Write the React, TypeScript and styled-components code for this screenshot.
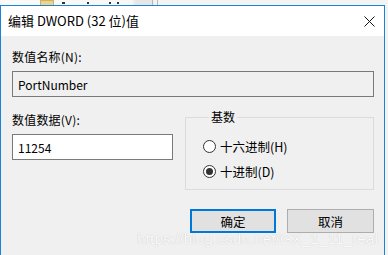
import React from 'react'
import styled, { createGlobalStyle } from 'styled-components'

const GlobalStyle = createGlobalStyle`
  html, body {
    margin: 0;
    padding: 0;
    background: #f2f2f2;
  }
  body {
    width: 388px;
    height: 255px;
    overflow: hidden;
    font-family: 'Microsoft YaHei UI', 'Noto Sans CJK SC', 'Liberation Sans', sans-serif;
  }
`

const Screen = styled.div`
  position: relative;
  width: 388px;
  height: 255px;
  overflow: hidden;
  display: flex;
  flex-direction: column;
`

const BackStrip = styled.div`
  height: 5px;
  display: flex;
  align-items: flex-end;
  background: linear-gradient(90deg, #fafafa 0%, #f7f7f7 34%, #e6e6e6 35%, #e6e6e6 39%, #f4f4f4 40%, #f4f4f4 100%);
  overflow: hidden;
`

const Folder = styled.span`
  width: 12px;
  height: 4px;
  margin-left: 40px;
  background: #ecd48e;
  border: 1px solid #cfb467;
  border-bottom: none;
`

const Mark = styled.span<{ left: number; w?: number }>`
  width: ${({ w }) => w ?? 2}px;
  height: 2px;
  margin-left: ${({ left }) => left}px;
  background: #333;
  margin-bottom: 1px;
`

const Sep = styled.span<{ left: number }>`
  width: 1px;
  height: 5px;
  margin-left: ${({ left }) => left}px;
  background: #b8b8b8;
`

const Dialog = styled.div`
  flex: 1;
  width: 383px;
  display: flex;
  flex-direction: column;
  border: 1px solid #1883d7;
  border-bottom: none;
  background: #f0f0f0;
`

const TitleBar = styled.div`
  height: 30px;
  display: flex;
  align-items: center;
  justify-content: space-between;
  padding: 0 9px 0 7px;
  background: #fff;
`

const Title = styled.span`
  font-size: 13px;
  color: #000;
  padding-bottom: 1px;
`

const CloseIcon = () => (
  <svg width="11" height="11" viewBox="0 0 11 11">
    <path d="M0.5 0.5 L10.5 10.5 M10.5 0.5 L0.5 10.5" stroke="#111" strokeWidth="1" />
  </svg>
)

const Body = styled.div`
  display: flex;
  flex-direction: column;
  padding: 13px 10px 0 11px;
`

const Label = styled.div`
  font-size: 12px;
  line-height: 16px;
  color: #000;
  margin-bottom: 6px;
  letter-spacing: 0.2px;
`

const TextBox = styled.div<{ disabled?: boolean; width?: number }>`
  box-sizing: border-box;
  height: 26px;
  width: ${({ width }) => (width ? `${width}px` : '100%')};
  display: flex;
  align-items: center;
  padding: 0 5px;
  font-size: 12px;
  color: #000;
  background: ${({ disabled }) => (disabled ? '#f0f0f0' : '#fff')};
  border: 1px solid #7a7a7a;
`

const Row = styled.div`
  display: flex;
  margin-top: 13px;
  gap: 12px;
`

const Column = styled.div`
  display: flex;
  flex-direction: column;
  padding-top: 2px;
`

const GroupBox = styled.fieldset`
  box-sizing: border-box;
  width: 189px;
  height: 80px;
  margin: 0;
  padding: 12px 0 0 17px;
  border: 1px solid #dcdcdc;
  display: flex;
  flex-direction: column;
  gap: 5px;
`

const Legend = styled.legend`
  font-size: 12px;
  padding: 0 2px;
  margin-left: 6px;
  line-height: 14px;
`

const RadioRow = styled.div`
  display: flex;
  align-items: center;
  gap: 4px;
  height: 20px;
  font-size: 12.5px;
`

const RadioCircle = styled.span<{ checked?: boolean }>`
  box-sizing: border-box;
  width: 13px;
  height: 13px;
  border-radius: 50%;
  border: 1px solid #333;
  background: #fff;
  display: flex;
  align-items: center;
  justify-content: center;
  &::after {
    content: '';
    width: 7px;
    height: 7px;
    border-radius: 50%;
    background: ${({ checked }) => (checked ? '#333' : 'transparent')};
  }
`

const ButtonRow = styled.div`
  display: flex;
  justify-content: flex-end;
  gap: 11px;
  margin-top: 19px;
`

const Button = styled.div<{ primary?: boolean }>`
  box-sizing: border-box;
  width: ${({ primary }) => (primary ? 86 : 87)}px;
  height: 24px;
  display: flex;
  align-items: center;
  justify-content: center;
  font-size: 12.5px;
  color: #000;
  background: #e1e1e1;
  border: ${({ primary }) => (primary ? '2px solid #0078d7' : '1px solid #adadad')};
`

const Watermark = styled.div`
  position: absolute;
  right: 10px;
  bottom: 8px;
  font-family: 'Liberation Sans', Arial, sans-serif;
  font-size: 15px;
  color: rgba(255, 255, 255, 0.92);
  text-shadow: 0 0 1px rgba(110, 110, 110, 0.4);
  letter-spacing: 0.2px;
  pointer-events: none;
`

export default function App() {
  return (
    <Screen>
      <GlobalStyle />
      <BackStrip>
        <Folder />
        <Mark left={8} w={3} />
        <Mark left={22} />
        <Mark left={20} />
        <Mark left={6} />
        <Sep left={33} />
        <Sep left={4} />
      </BackStrip>
      <Dialog>
        <TitleBar>
          <Title>编辑 DWORD (32 位)值</Title>
          <CloseIcon />
        </TitleBar>
        <Body>
          <Label>数值名称(N):</Label>
          <TextBox disabled>PortNumber</TextBox>
          <Row>
            <Column>
              <Label>数值数据(V):</Label>
              <TextBox width={161}>11254</TextBox>
            </Column>
            <GroupBox>
              <Legend>基数</Legend>
              <RadioRow>
                <RadioCircle />
                十六进制(H)
              </RadioRow>
              <RadioRow>
                <RadioCircle checked />
                十进制(D)
              </RadioRow>
            </GroupBox>
          </Row>
          <ButtonRow>
            <Button primary>确定</Button>
            <Button>取消</Button>
          </ButtonRow>
        </Body>
      </Dialog>
      <Watermark>https://blog.csdn.net/GX_1_11_real</Watermark>
    </Screen>
  )
}
